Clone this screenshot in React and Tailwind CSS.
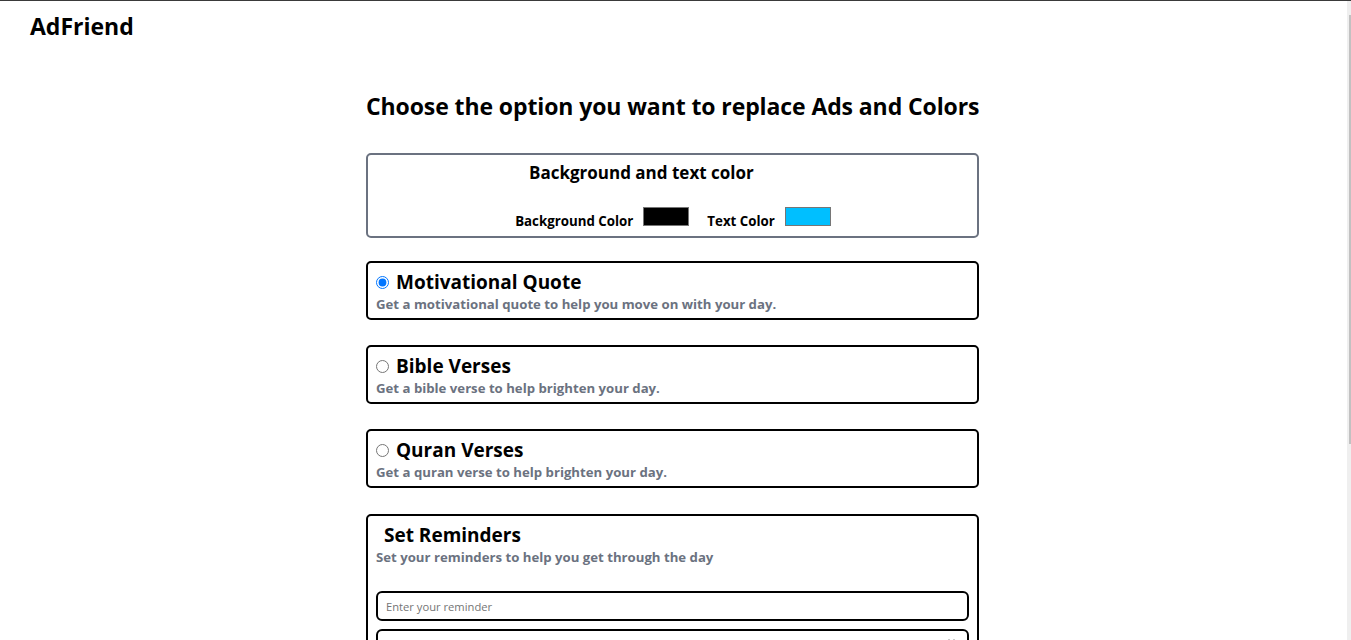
import { useState } from "react";

const options = [
  { id: "quote", title: "Motivational Quote", desc: "Get a motivational quote to help you move on with your day." },
  { id: "bible", title: "Bible Verses", desc: "Get a bible verse to help brighten your day." },
  { id: "quran", title: "Quran Verses", desc: "Get a quran verse to help brighten your day." },
];

export default function App() {
  const [choice, setChoice] = useState("quote");

  return (
    <div className="h-screen overflow-hidden flex bg-white border-t border-[#3a3a3a] font-['Open_Sans',sans-serif] text-black">
      <div className="flex-1 min-w-0 pr-[2px]">
        {/* Top bar */}
        <header className="h-[52px] px-[30px] pt-[8px]">
          <span className="text-[23px] font-bold leading-[34px]">AdFriend</span>
        </header>

        <main className="w-[613px] mx-auto pt-[36px]">
          <h1 className="text-[23px] font-bold leading-[34px] tracking-[-0.1px] whitespace-nowrap">
            Choose the option you want to replace Ads and Colors
          </h1>

          {/* Colours */}
          <section className="mt-[30px] border-2 border-[#6b7280] rounded-[5px] h-[85px] pt-[6px]">
            <h2 className="text-[17px] font-bold leading-[24px] pl-[161px]">Background and text color</h2>
            <div className="flex items-baseline justify-center gap-[10px] mt-[22px] pl-[1px]">
              <label className="text-[13.3px] font-bold leading-[16px]">Background Color</label>
              <span className="w-[46px] h-[19px] bg-black border border-[#767676]" />
              <label className="ml-[8px] text-[13.3px] font-bold leading-[16px]">Text Color</label>
              <span className="w-[46px] h-[19px] bg-[#00bfff] border border-[#767676]" />
            </div>
          </section>

          {/* Content options */}
          <div className="flex flex-col gap-[25px] mt-[23px]">
            {options.map((o) => (
              <label
                key={o.id}
                className="block h-[59px] border-2 border-black rounded-[5px] px-[8px] pt-[6px] cursor-pointer"
              >
                <div className="flex items-center gap-[7px]">
                  <input
                    type="radio"
                    name="content"
                    checked={choice === o.id}
                    onChange={() => setChoice(o.id)}
                    className="w-[13px] h-[13px] m-0 accent-[#0075ff]"
                  />
                  <span className="text-[19px] font-bold leading-[26px]">{o.title}</span>
                </div>
                <p className="text-[13.2px] font-bold text-[#6b7280] leading-[18px]">{o.desc}</p>
              </label>
            ))}
          </div>

          {/* Reminders */}
          <section className="mt-[26px] border-2 border-black rounded-[5px] px-[8px] pt-[6px] pb-3">
            <h2 className="pl-[8px] text-[19px] font-bold leading-[26px]">Set Reminders</h2>
            <p className="text-[13.2px] font-bold text-[#6b7280] leading-[18px]">
              Set your reminders to help you get through the day
            </p>
            <input
              type="text"
              placeholder="Enter your reminder"
              className="block w-full mt-[25px] h-[30px] border-2 border-black rounded-[6px] px-[8px] text-[11.2px] placeholder:text-[#757575] outline-none"
            />
            <input
              type="datetime-local"
              className="block w-full mt-[8px] h-[32px] border-2 border-black rounded-[6px] px-[8px] text-[11.2px] text-transparent outline-none"
            />
          </section>
        </main>
      </div>

      {/* Scrollbar */}
      <div className="w-[4px] shrink-0 bg-[#efefef] pt-[14px]">
        <div className="ml-[2px] w-[2px] h-[429px] bg-[#c1c1c1]" />
      </div>
    </div>
  );
}
